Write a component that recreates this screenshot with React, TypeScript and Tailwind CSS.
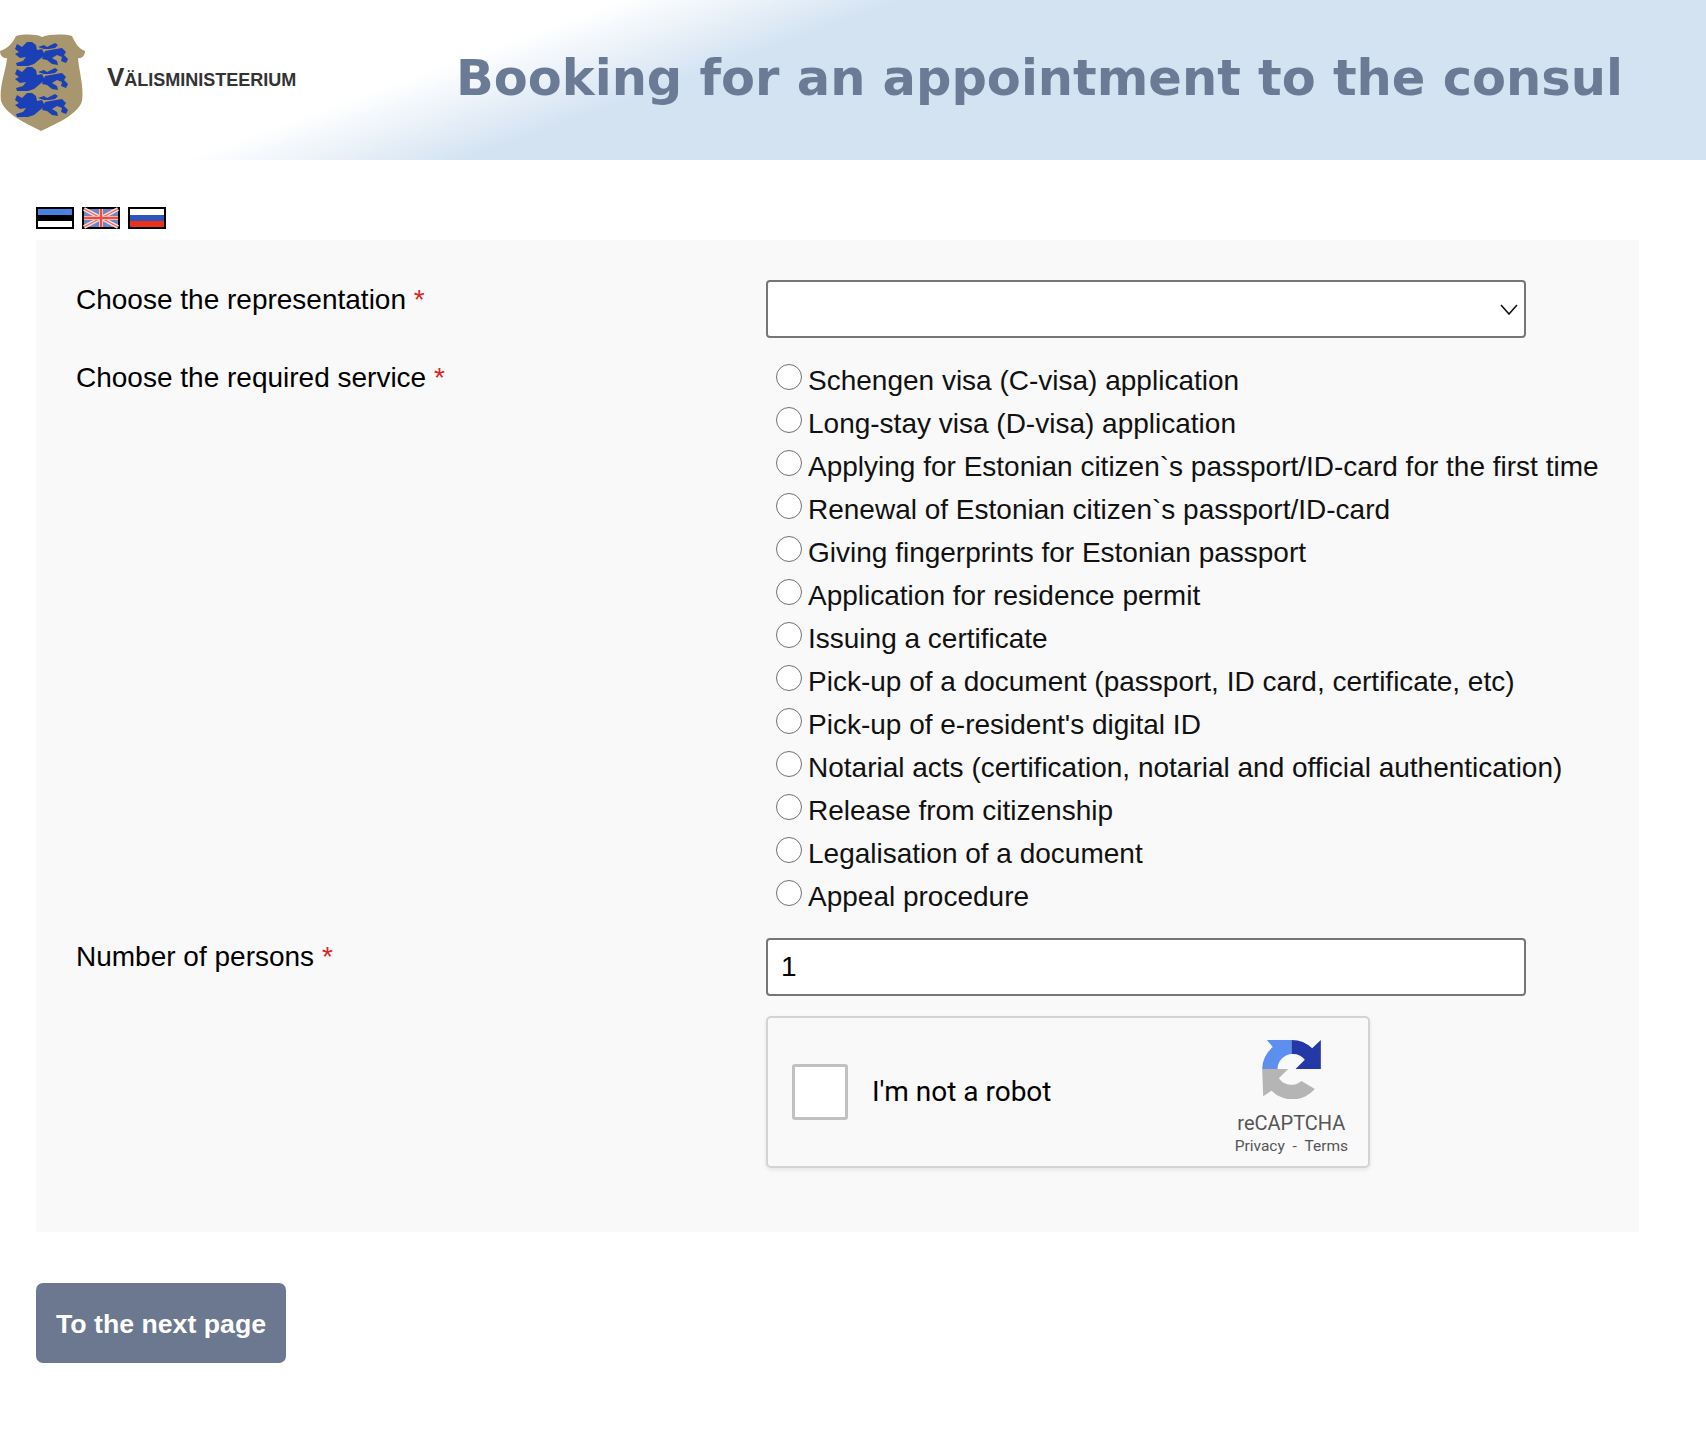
const services = [
  "Schengen visa (C-visa) application",
  "Long-stay visa (D-visa) application",
  "Applying for Estonian citizen`s passport/ID-card for the first time",
  "Renewal of Estonian citizen`s passport/ID-card",
  "Giving fingerprints for Estonian passport",
  "Application for residence permit",
  "Issuing a certificate",
  "Pick-up of a document (passport, ID card, certificate, etc)",
  "Pick-up of e-resident's digital ID",
  "Notarial acts (certification, notarial and official authentication)",
  "Release from citizenship",
  "Legalisation of a document",
  "Appeal procedure",
];

function Lion({ y }: { y: number }) {
  return (
    <g transform={`translate(14 ${y})`} fill="#1b3fb4">
      <path d="M3 3 L8 6 L13 1 L18 1 L22 4 L23 9 L28 8 L31 14 L26 18 L20 23 L14 25 L3 25 L2 22 L9 20 L12 16 L6 17 L1 13 L5 11 L1 8 Z" />
      <path d="M24 6 L30 4 L33 6 L37 4 L41 2 L44 4 L41 7 L35 8 L30 8 Z" />
      <path d="M31 10 L42 8 L48 7 L52 11 L50 14 L54 18 L52 22 L47 20 L48 16 L43 14 L38 17 L43 20 L44 24 L38 23 L33 19 L28 18 Z" />
    </g>
  );
}

function Crest() {
  return (
    <svg width="86" height="100" viewBox="0 0 86 100" className="shrink-0 mt-[3px]">
      <g transform="translate(0 -31)">
        <path
          fill="#a8966e"
          d="M16 35 C24 33 36 33 42 36 C50 33 64 33 72 35 C75 42 79 48 85 50 C85 55 81 58 78 57 C79 70 84 85 82 100 C78 113 58 122 41 130 C26 122 6 114 1 100 C-1 85 6 70 7 57 C4 58 0 55 0 50 C7 48 13 42 16 35 Z"
        />
        <Lion y={40} />
        <Lion y={65} />
        <Lion y={91} />
      </g>
    </svg>
  );
}

function Flags() {
  return (
    <div className="flex gap-2 h-[22px]">
      <svg width="38" height="22" viewBox="0 0 38 22">
        <rect width="38" height="22" fill="#000" />
        <rect x="2" y="2" width="34" height="6" fill="#4b82e0" />
        <rect x="2" y="14" width="34" height="6" fill="#fff" />
      </svg>
      <svg width="38" height="22" viewBox="0 0 38 22">
        <rect width="38" height="22" fill="#000" />
        <rect x="2" y="2" width="34" height="18" fill="#6f86c4" />
        <path d="M2 2 L36 20 M36 2 L2 20" stroke="#f6dcdc" strokeWidth="4" />
        <path d="M2 2 L36 20 M36 2 L2 20" stroke="#ee6a5e" strokeWidth="1.4" />
        <path d="M19 2 V20 M2 11 H36" stroke="#f6dcdc" strokeWidth="4" />
        <path d="M19 2 V20 M2 11 H36" stroke="#ef4a3a" strokeWidth="2.4" />
      </svg>
      <svg width="38" height="22" viewBox="0 0 38 22">
        <rect width="38" height="22" fill="#000" />
        <rect x="2" y="2" width="34" height="6" fill="#fff" />
        <rect x="2" y="8" width="34" height="6" fill="#2f55b8" />
        <rect x="2" y="14" width="34" height="6" fill="#ee2f1c" />
      </svg>
    </div>
  );
}

function RecaptchaLogo() {
  return (
    <svg width="59" height="60" viewBox="0 0 176 180">
      <path
        fill="#b5b5b5"
        d="M0 90 L78 90 L50 118 A46 46 0 0 0 118 126 L158 150 A88 88 0 0 1 28 155 L3 172 Z"
      />
      <path
        fill="#5d8fee"
        d="M0 90 A88 88 0 0 1 32 24 L14 3 L88 3 L88 45 A46 46 0 0 0 46 90 Z"
      />
      <path
        fill="#2439a8"
        d="M88 3 A88 88 0 0 1 150 28 L176 3 L176 90 L100 90 L128 62 A46 46 0 0 0 88 45 Z"
      />
    </svg>
  );
}

function Recaptcha() {
  return (
    <div className="flex items-center w-[604px] h-[152px] mt-5 pl-6 pr-5 rounded-[5px] border-2 border-[#d3d3d3] bg-[#f9f9f9] shadow-[0_2px_4px_rgba(0,0,0,0.08)] font-['Roboto',sans-serif]">
      <div className="w-[56px] h-[56px] rounded-[3px] border-[3px] border-[#c1c1c1] bg-white"></div>
      <span className="ml-6 text-[28px] text-black">I'm not a robot</span>
      <div className="ml-auto flex flex-col items-center pt-3">
        <RecaptchaLogo />
        <span className="mt-3 text-[20px] leading-6 text-[#555]">
          reCAPTCHA
        </span>
        <span className="text-[15.5px] leading-[22px] text-[#555]">
          Privacy&nbsp;&nbsp;-&nbsp;&nbsp;Terms
        </span>
      </div>
    </div>
  );
}

export default function App() {
  const styles = {
    label: "text-[28px] leading-[43px] text-black",
    star: "text-[#d9261c]",
    input:
      "w-[760px] rounded-[4px] border-2 border-[#767676] bg-white text-[28px] text-black",
  };

  return (
    <div className="min-h-[1430px] bg-white font-['Liberation_Sans',Arial,sans-serif]">
      <header className="flex h-[160px] items-center bg-[linear-gradient(160deg,#ffffff_29%,#d4e3f2_42%)]">
        <Crest />
        <span className="ml-[21px] w-[193px] whitespace-nowrap text-[26px] font-bold text-[#333] [font-variant:small-caps] -mt-[6px]">
          Välisministeerium
        </span>
        <h1 className="ml-[156px] -mt-[3px] whitespace-nowrap text-[49.5px] font-bold text-[#6b7a95] font-['DejaVu_Sans',sans-serif]">
          Booking for an appointment to the consul
        </h1>
      </header>

      <main className="px-9">
        <div className="pt-[47px] pb-[11px]">
          <Flags />
        </div>

        <form className="w-[1603px] bg-[#f9f9f9] pt-10 pb-16 pl-10">
          <div className="grid grid-cols-[690px_1fr]">
            <label className={`${styles.label} -mt-[2px]`}>
              Choose the representation <span className={styles.star}>*</span>
            </label>
            <div className="relative h-[58px] w-[760px]">
              <select className={`${styles.input} h-[58px] appearance-none`}></select>
              <svg
                width="18"
                height="11"
                viewBox="0 0 18 11"
                className="absolute right-[8px] top-[24px]"
              >
                <path d="M1 1 L9 10 L17 1" fill="none" stroke="#111" strokeWidth="1.6" />
              </svg>
            </div>

            <label className={`${styles.label} mt-[18px]`}>
              Choose the required service <span className={styles.star}>*</span>
            </label>
            <div className="mt-[21px] flex flex-col">
              {services.map((service) => (
                <label key={service} className="flex h-[43px] items-start pl-[10px] whitespace-nowrap">
                  <input
                    type="radio"
                    name="service"
                    className="mt-[5px] h-[26px] w-[26px] shrink-0 appearance-none rounded-full border border-[#707070] bg-white"
                  />
                  <span className="ml-[6px] text-[28px] leading-[43px] text-[#111]">{service}</span>
                </label>
              ))}
            </div>

            <label className={`${styles.label} mt-[17px]`}>
              Number of persons <span className={styles.star}>*</span>
            </label>
            <div className="mt-5">
              <input
                type="text"
                defaultValue="1"
                className={`${styles.input} block h-[58px] px-[13px]`}
              />
            </div>

            <div></div>
            <Recaptcha />
          </div>
        </form>

        <button className="mt-[51px] h-[80px] w-[250px] rounded-[7px] bg-[#6b7890] pt-[2px] text-[26.7px] font-bold text-white">
          To the next page
        </button>
      </main>
    </div>
  );
}
